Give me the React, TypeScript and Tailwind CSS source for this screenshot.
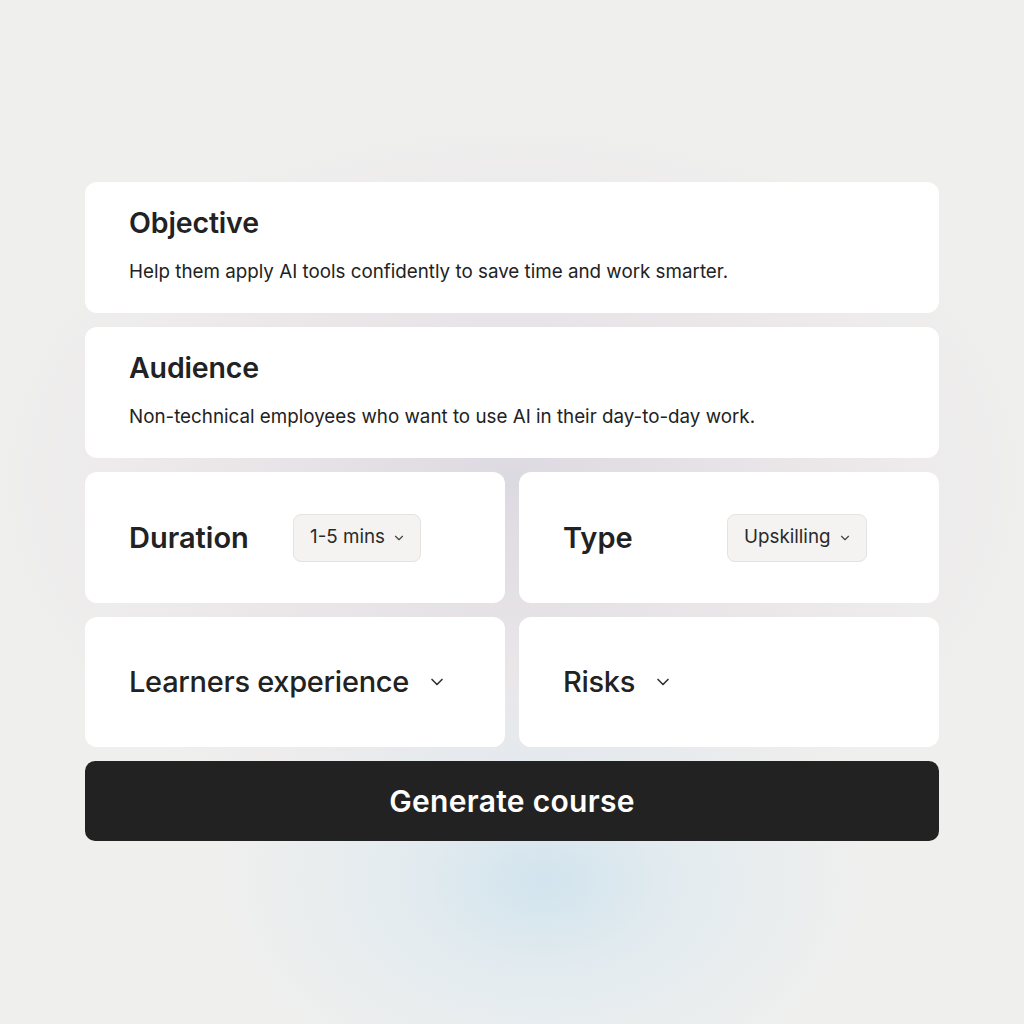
import React from 'react';
import { ChevronDown } from 'lucide-react';

function TextCard({ title, body }: { title: string; body: string }) {
  return (
    <div className="h-[131px] bg-white rounded-xl pl-[44px] pb-[3px] flex flex-col justify-center gap-5">
      <h2 className="text-[28.5px] leading-8 font-semibold tracking-[-0.005em] text-[#222]">{title}</h2>
      <p className="text-[18.8px] leading-[26px] text-[#222]">{body}</p>
    </div>
  );
}

function SelectCard({ label, value }: { label: string; value: string }) {
  return (
    <div className="h-[131px] bg-white rounded-xl pl-[44px] flex items-center">
      <span className="w-[164px] text-[29px] font-semibold text-[#222]">{label}</span>
      <button className="h-12 pl-4 pr-[14px] flex items-center gap-[7px] rounded-lg bg-[#f4f3f2] border border-[#e4e3e1] text-[18.8px] text-[#2a2a2a]">
        {value}
        <ChevronDown className="w-3.5 h-3.5 text-[#444]" strokeWidth={2} />
      </button>
    </div>
  );
}

function DropCard({ label }: { label: string }) {
  return (
    <div className="h-[130px] bg-white rounded-xl pl-[44px] flex items-center gap-[18px]">
      <span className="text-[29px] font-medium tracking-[-0.01em] text-[#222]">{label}</span>
      <ChevronDown className="w-5 h-5 text-[#333]" strokeWidth={2} />
    </div>
  );
}

export default function App() {
  return (
    <div
      className="w-full h-[1024px] overflow-hidden bg-[#efefee] bg-[radial-gradient(ellipse_320px_220px_at_53%_86%,#d2e4ee_0%,rgba(220,233,240,0.6)_45%,rgba(240,239,238,0)_100%),radial-gradient(ellipse_520px_360px_at_50%_47%,#dcdae1_0%,rgba(234,228,231,0.7)_60%,rgba(240,239,238,0)_100%)] pt-[182px]"
      style={{ fontFamily: 'Inter, "Noto Sans", sans-serif' }}
    >
      <div className="w-[854px] ml-[85px] flex flex-col gap-[14px]">
        <TextCard title="Objective" body="Help them apply AI tools confidently to save time and work smarter." />
        <TextCard title="Audience" body="Non-technical employees who want to use AI in their day-to-day work." />
        <div className="grid grid-cols-2 gap-[14px]">
          <SelectCard label="Duration" value="1-5 mins" />
          <SelectCard label="Type" value="Upskilling" />
        </div>
        <div className="grid grid-cols-2 gap-[14px]">
          <DropCard label="Learners experience" />
          <DropCard label="Risks" />
        </div>
        <button className="h-20 rounded-[10px] bg-[#222222] text-white text-[30px] font-semibold tracking-[0.01em]">
          Generate course
        </button>
      </div>
    </div>
  );
}
